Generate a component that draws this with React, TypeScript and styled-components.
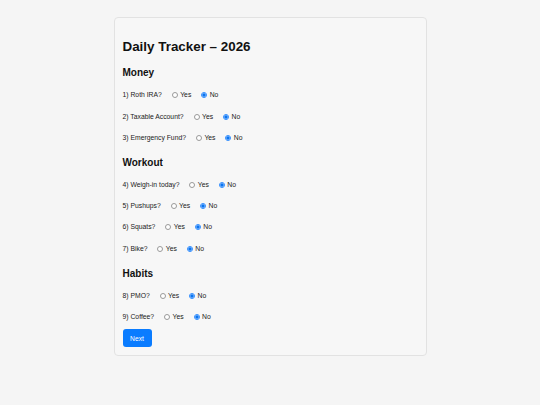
import React, { useState } from 'react';
import styled, { createGlobalStyle } from 'styled-components';

const GlobalStyle = createGlobalStyle`
  html, body {
    margin: 0;
    padding: 0;
    background: #f5f5f5;
    font-family: "Liberation Sans", Arial, Helvetica, sans-serif;
    color: #111;
  }
`

const sections = [
  { title: 'Money', questions: ['Roth IRA?', 'Taxable Account?', 'Emergency Fund?'] },
  { title: 'Workout', questions: ['Weigh-in today?', 'Pushups?', 'Squats?', 'Bike?'] },
  { title: 'Habits', questions: ['PMO?', 'Coffee?'] },
]

export default function App() {
  const [answers, setAnswers] = useState<Record<string, string>>({})

  let count = 0

  return (
    <>
      <GlobalStyle />
      <Page>
        <Card>
          <Title>Daily Tracker – 2026</Title>
          {sections.map(section => (
            <Section key={section.title}>
              <SectionTitle>{section.title}</SectionTitle>
              <RowList>
                {section.questions.map(q => {
                  count += 1
                  const name = `q${count}`
                  const value = answers[name] ?? 'no'
                  return (
                    <Row key={name}>
                      <Question>{count}) {q}</Question>
                      <Option>
                        <Radio
                          type="radio"
                          name={name}
                          checked={value === 'yes'}
                          onChange={() => setAnswers(prev => ({ ...prev, [name]: 'yes' }))}
                        />
                        Yes
                      </Option>
                      <Option>
                        <Radio
                          type="radio"
                          name={name}
                          checked={value === 'no'}
                          onChange={() => setAnswers(prev => ({ ...prev, [name]: 'no' }))}
                        />
                        No
                      </Option>
                    </Row>
                  )
                })}
              </RowList>
            </Section>
          ))}
          <NextButton type="button">Next</NextButton>
        </Card>
      </Page>
    </>
  )
}

const Page = styled.div`
  padding-top: 17.3px;
`

const Card = styled.div`
  box-sizing: border-box;
  width: 313px;
  margin: 0 auto;
  padding: 8px 8px 7.4px 8px;
  border: 1px solid #e2e2e2;
  border-radius: 4px;
  background: #f7f7f7;
`

const Title = styled.h1`
  margin: 12.3px 0 12.5px;
  font-size: 13.4px;
  line-height: 16px;
  font-weight: bold;
`

const Section = styled.section`
  margin-bottom: 15px;

  &:last-of-type {
    margin-bottom: 0;
  }
`

const SectionTitle = styled.h2`
  margin: 0 0 12.3px;
  font-size: 10px;
  line-height: 12px;
  font-weight: bold;
`

const RowList = styled.div`
  display: flex;
  flex-direction: column;
  gap: 13.2px;
`

const Row = styled.div`
  display: flex;
  align-items: center;
  gap: 10px;
  height: 8px;
  font-size: 6.8px;
  line-height: 8px;
  color: #1a1a1a;
`

const Question = styled.span`
  white-space: nowrap;
`

const Option = styled.label`
  display: inline-flex;
  align-items: center;
  gap: 2.4px;
  cursor: pointer;
`

const Radio = styled.input`
  appearance: none;
  box-sizing: border-box;
  width: 6px;
  height: 6px;
  margin: 0;
  border: 0.7px solid #9a9a9a;
  border-radius: 50%;
  background: #fff;
  cursor: pointer;

  &:checked {
    border-color: #2f8cff;
    background: radial-gradient(circle, #0a74f0 0 52%, #d6e8ff 62%);
  }
`

const NextButton = styled.button`
  display: block;
  margin-top: 8.1px;
  width: 29px;
  height: 18px;
  padding: 0;
  border: none;
  border-radius: 3px;
  background: #0a7cff;
  color: #fff;
  font-family: inherit;
  font-size: 6.7px;
  cursor: pointer;
`
